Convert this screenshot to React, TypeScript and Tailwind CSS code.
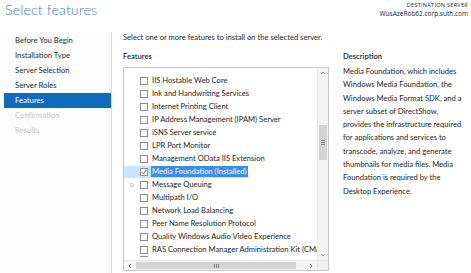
const steps = [
  { label: 'Before You Begin', state: 'done' },
  { label: 'Installation Type', state: 'done' },
  { label: 'Server Selection', state: 'done' },
  { label: 'Server Roles', state: 'done' },
  { label: 'Features', state: 'active' },
  { label: 'Confirmation', state: 'off' },
  { label: 'Results', state: 'off' },
];

const features = [
  { label: 'IIS Hostable Web Core' },
  { label: 'Ink and Handwriting Services' },
  { label: 'Internet Printing Client' },
  { label: 'IP Address Management (IPAM) Server' },
  { label: 'iSNS Server service' },
  { label: 'LPR Port Monitor' },
  { label: 'Management OData IIS Extension' },
  { label: 'Media Foundation (Installed)', checked: true, selected: true },
  { label: 'Message Queuing', expand: true },
  { label: 'Multipath I/O' },
  { label: 'Network Load Balancing' },
  { label: 'Peer Name Resolution Protocol' },
  { label: 'Quality Windows Audio Video Experience' },
  { label: 'RAS Connection Manager Administration Kit (CMAK)' },
];

const description = [
  'Media Foundation, which includes',
  'Windows Media Foundation, the',
  'Windows Media Format SDK, and a',
  'server subset of DirectShow,',
  'provides the infrastructure required',
  'for applications and services to',
  'transcode, analyze, and generate',
  'thumbnails for media files. Media',
  'Foundation is required by the',
  'Desktop Experience.',
];

function Checkbox({ checked }: { checked?: boolean }) {
  return (
    <span className="w-[8px] h-[8px] border border-[#8e8e8e] bg-white flex items-center justify-center shrink-0">
      {checked && (
        <svg width="6" height="6" viewBox="0 0 6 6">
          <path d="M0.8 3.2 L2.3 4.7 L5.2 1.2" fill="none" stroke="#4a4a4a" strokeWidth="0.9" />
        </svg>
      )}
    </span>
  );
}

function Chevron({ dir }: { dir: 'up' | 'down' | 'left' | 'right' }) {
  const d = {
    up: 'M1 4 L3 2 L5 4',
    down: 'M1 2 L3 4 L5 2',
    left: 'M4 1 L2 3 L4 5',
    right: 'M2 1 L4 3 L2 5',
  }[dir];
  return (
    <svg width="6" height="6" viewBox="0 0 6 6">
      <path d={d} fill="none" stroke="#8a8a8a" strokeWidth="0.9" />
    </svg>
  );
}

export default function App() {
  return (
    <div
      className="w-[471px] h-[273px] overflow-hidden bg-white text-[#1e1e1e] flex flex-col"
      style={{ fontFamily: 'Lato, "Open Sans", sans-serif' }}
    >
      {/* header */}
      <div className="h-[32px] flex justify-between shrink-0">
        <div className="pl-[5px] pt-[1px] text-[14.5px] font-light leading-[18px] text-[#4f7fa3]">
          Select features
        </div>
        <div
          className="pr-[3px] pt-[2px] text-right"
          style={{ fontFamily: '"Open Sans", sans-serif' }}
        >
          <div className="text-[5.5px] leading-[7px] tracking-[0.3px]">DESTINATION SERVER</div>
          <div className="text-[6.5px] leading-[10px]">WusAzeRob62.corp.suth.com</div>
        </div>
      </div>

      <div className="flex flex-1 min-h-0">
        {/* sidebar */}
        <div className="w-[112px] shrink-0 pl-[4px] pt-[1px] border-r border-[#dcdcdc] bg-[#fdfdfd]">
          {steps.map((s) => (
            <div
              key={s.label}
              className={`h-[15px] pl-[11px] flex items-center text-[7.7px] ${
                s.state === 'active'
                  ? 'bg-[#0f6cbd] text-white'
                  : s.state === 'off'
                  ? 'text-[#c4c4c4]'
                  : 'text-[#2a2a2a]'
              }`}
            >
              {s.label}
            </div>
          ))}
        </div>

        {/* content */}
        <div className="flex-1 pl-[11px] pr-[5px] flex flex-col min-w-0">
          <div className="h-[11px] text-[7.6px] leading-[11px] whitespace-nowrap">
            Select one or more features to install on the selected server.
          </div>
          <div className="flex flex-1 min-h-0 mt-[8px]">
            {/* list */}
            <div className="w-[206px] shrink-0 flex flex-col">
              <div className="h-[11px] text-[7.6px] leading-[11px] font-semibold">Features</div>
              <div className="mt-[5px] h-[204px] border border-[#c8c8c8] flex flex-col">
                <div className="flex flex-1 min-h-0">
                  <div className="flex-1 min-w-0 overflow-hidden pt-[6px]">
                    {features.map((f) => (
                      <div key={f.label} className="h-[13px] flex items-center whitespace-nowrap">
                        <div
                          className={`flex items-center h-[12px] pl-[1px] ${
                            f.selected ? 'bg-[#cce4f7]' : ''
                          }`}
                        >
                          <span className="w-[14px] flex justify-center">
                            {f.expand && (
                              <svg width="5" height="6" viewBox="0 0 5 6">
                                <path d="M0.8 0.8 L4 3 L0.8 5.2 Z" fill="none" stroke="#a8a8a8" strokeWidth="0.7" />
                              </svg>
                            )}
                          </span>
                          <span className="ml-[1px]">
                            <Checkbox checked={f.checked} />
                          </span>
                          <span
                            className={`ml-[3px] text-[7.6px] leading-[11px] px-[1px] ${
                              f.selected ? 'bg-[#3a8ee6] text-white' : ''
                            }`}
                          >
                            {f.label}
                          </span>
                        </div>
                      </div>
                    ))}
                    <div className="h-[13px] flex items-start pl-[16px]">
                      <span className="w-[8px] h-[2px] border-t border-[#8e8e8e]" />
                    </div>
                  </div>
                  {/* vertical scrollbar */}
                  <div className="w-[11px] shrink-0 border-l border-[#e6e6e6] bg-[#f4f4f4] flex flex-col">
                    <div className="h-[10px] flex items-center justify-center">
                      <Chevron dir="up" />
                    </div>
                    <div className="h-[47px]" />
                    <div className="h-[35px] mx-[1px] bg-[#d4d4d4] flex flex-col items-center justify-center gap-[1px]">
                      <span className="w-[4px] h-px bg-[#808080]" />
                      <span className="w-[4px] h-px bg-[#808080]" />
                      <span className="w-[4px] h-px bg-[#808080]" />
                    </div>
                    <div className="flex-1" />
                    <div className="h-[10px] flex items-center justify-center">
                      <Chevron dir="down" />
                    </div>
                  </div>
                </div>
                {/* horizontal scrollbar */}
                <div className="h-[10px] shrink-0 border-t border-[#e6e6e6] bg-[#f4f4f4] flex">
                  <div className="w-[12px] flex items-center justify-center">
                    <Chevron dir="left" />
                  </div>
                  <div className="w-[160px] my-[1px] bg-[#d4d4d4] flex items-center justify-center gap-[1px]">
                    <span className="w-px h-[4px] bg-[#808080]" />
                    <span className="w-px h-[4px] bg-[#808080]" />
                    <span className="w-px h-[4px] bg-[#808080]" />
                  </div>
                  <div className="flex-1 flex items-center justify-end pr-[3px]">
                    <Chevron dir="right" />
                  </div>
                  <div className="w-[11px] bg-[#efefef] border-l border-[#e6e6e6]" />
                </div>
              </div>
            </div>

            {/* description */}
            <div className="ml-[14px] flex-1 min-w-0">
              <div className="h-[11px] text-[7.6px] leading-[11px] font-semibold">Description</div>
              <div className="mt-[3px] text-[7.6px] leading-[13.3px] whitespace-nowrap">
                {description.map((l) => (
                  <div key={l}>{l}</div>
                ))}
              </div>
            </div>
          </div>
        </div>
      </div>
    </div>
  );
}
